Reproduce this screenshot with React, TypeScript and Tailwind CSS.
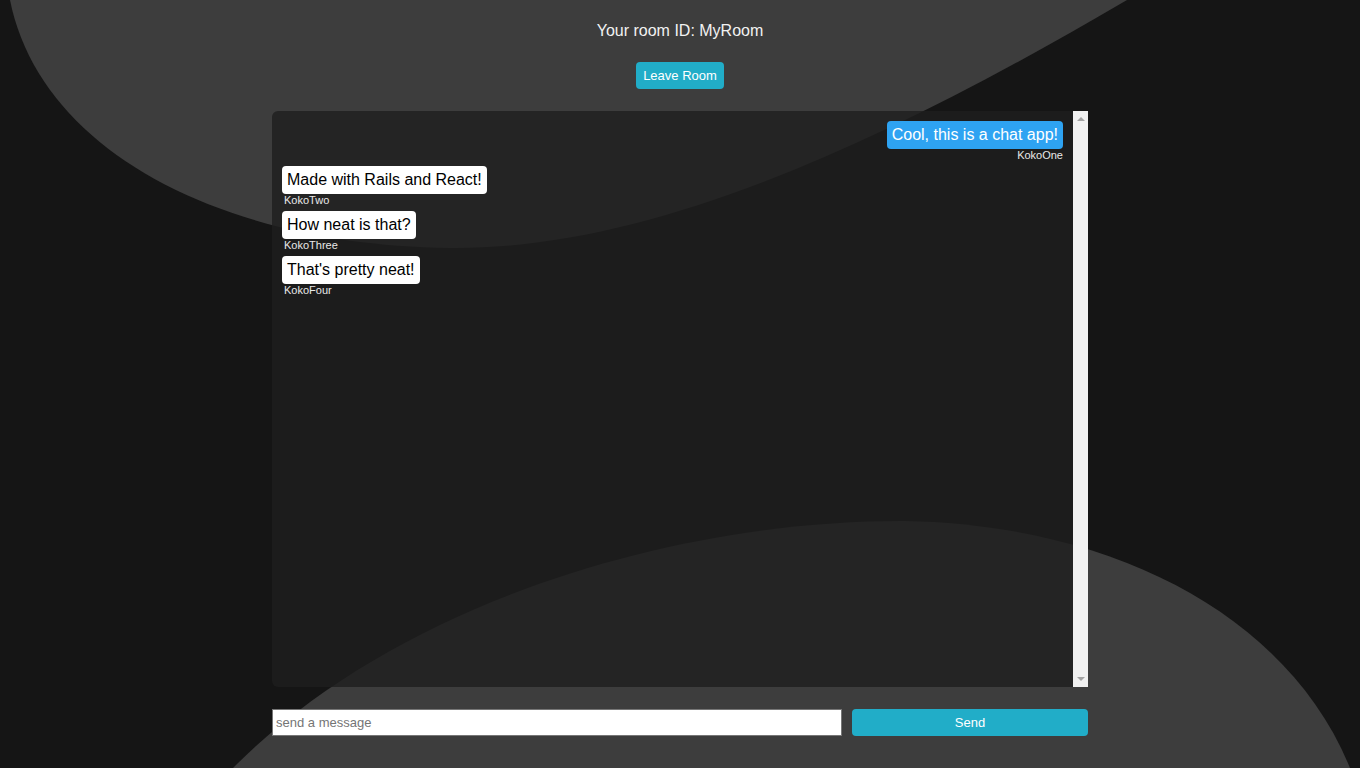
const messages = [
  { text: "Cool, this is a chat app!", user: "KokoOne", mine: true },
  { text: "Made with Rails and React!", user: "KokoTwo", mine: false },
  { text: "How neat is that?", user: "KokoThree", mine: false },
  { text: "That's pretty neat!", user: "KokoFour", mine: false },
];

function Backdrop() {
  return (
    <svg
      className="absolute inset-0 w-full h-full"
      viewBox="0 0 1360 768"
      preserveAspectRatio="none"
    >
      <path
        d="M 10 0 C 40 150, 220 245, 450 248 C 650 250, 880 145, 1127 0 Z"
        fill="#3d3d3d"
      />
      <path
        d="M 233 768 C 400 600, 680 520, 905 521 C 1120 525, 1290 620, 1350 768 Z"
        fill="#3d3d3d"
      />
    </svg>
  );
}

function Message({ text, user, mine }: { text: string; user: string; mine: boolean }) {
  return (
    <div className={"flex flex-col mb-[4px] " + (mine ? "items-end" : "items-start")}>
      <div
        className={
          "rounded-[4px] px-[5px] py-[5px] text-[16px] leading-[18px] " +
          (mine ? "bg-[#2ea3f2] text-white" : "bg-white text-black")
        }
      >
        {text}
      </div>
      <div className={"text-[11px] leading-[13px] text-[#e8e8e8] " + (mine ? "" : "ml-[2px]")}>
        {user}
      </div>
    </div>
  );
}

function Scrollbar() {
  return (
    <div className="w-[15px] bg-[#f1f1f1] flex flex-col justify-between items-center py-[6px]">
      <svg width="8" height="4" viewBox="0 0 8 4">
        <path d="M0 4 L4 0 L8 4 Z" fill="#a3a3a3" />
      </svg>
      <svg width="8" height="4" viewBox="0 0 8 4">
        <path d="M0 0 L8 0 L4 4 Z" fill="#a3a3a3" />
      </svg>
    </div>
  );
}

export default function App() {
  return (
    <div
      className="relative min-h-screen w-full overflow-hidden bg-[#151515]"
      style={{ fontFamily: '"Liberation Sans", Arial, sans-serif' }}
    >
      <Backdrop />
      <div className="relative flex flex-col items-center pt-[22px]">
        <h1 className="text-[16px] leading-[18px] text-[#f2f2f2]">Your room ID: MyRoom</h1>
        <button className="mt-[22px] h-[27px] px-[7px] rounded-[4px] bg-[#21adc8] text-white text-[13px]">
          Leave Room
        </button>
        <div className="mt-[22px] w-[816px] h-[576px] flex">
          <div className="flex-1 rounded-l-md bg-[rgba(30,30,30,0.8)] p-[10px]">
            {messages.map((m) => (
              <Message key={m.user} {...m} />
            ))}
          </div>
          <Scrollbar />
        </div>
        <div className="mt-[22px] w-[816px] flex gap-[10px]">
          <input
            placeholder="send a message"
            className="w-[570px] h-[27px] bg-white border border-[#767676] px-[3px] text-[13px] text-black placeholder:text-[#757575] outline-none"
          />
          <button className="flex-1 h-[27px] rounded-[4px] bg-[#21adc8] text-white text-[13px]">
            Send
          </button>
        </div>
      </div>
    </div>
  );
}
